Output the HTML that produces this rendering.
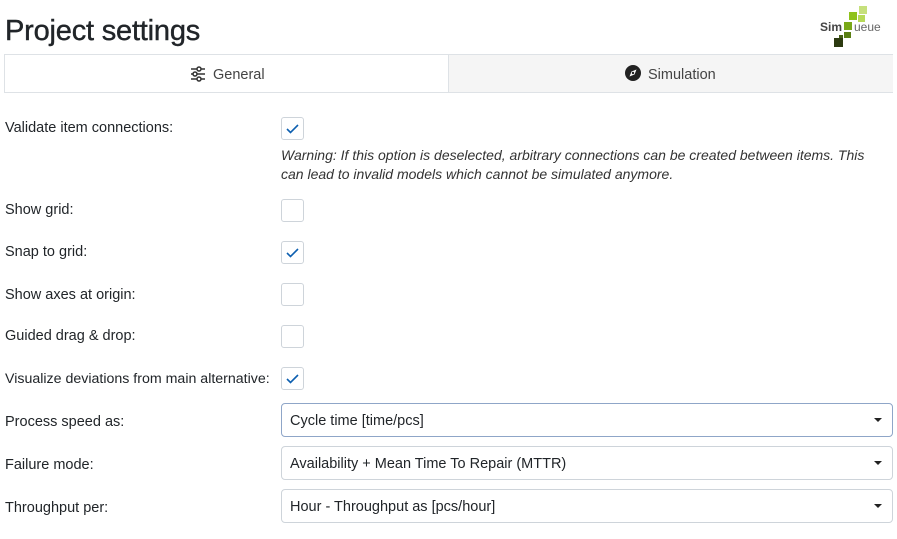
<!DOCTYPE html><html><head><style>
body{margin:0;width:897px;height:539px;background:#fff;font-family:"Liberation Sans",sans-serif;color:#212529;position:relative;overflow:hidden}
.a{position:absolute}
h1{position:absolute;left:5px;top:15px;margin:0;font-size:29px;font-weight:normal;letter-spacing:-0.2px;-webkit-text-stroke:0.4px #212529}
.tabs{left:4px;top:54px;width:887px;height:37px;border:1px solid #dee2e6;background:#fff}
.t2{position:absolute;left:443px;top:0;width:444px;height:37px;background:#f5f5f5;border-left:1px solid #dee2e6}
.tl{font-size:14.5px;color:#444}
.lab{left:5px;font-size:14.5px}
.cb{left:281px;width:21px;height:21px;border:1px solid #ced4da;border-radius:3px;background:#fff}
.cb svg{position:absolute;left:3px;top:3px}
.sel{left:281px;width:610px;height:32px;border:1px solid #ced4da;border-radius:4px;font-size:14.5px}
.sel span{position:absolute;left:8px;top:9px}
.sel i{position:absolute;right:10px;top:14px;border-left:4px solid transparent;border-right:4px solid transparent;border-top:4px solid #222}
</style></head><body>
<h1>Project settings</h1>
<svg class="a" style="left:818px;top:4px" width="76" height="44">
<rect x="41" y="2" width="8" height="8" fill="#c6e07c"/><rect x="31" y="8" width="8" height="8" fill="#8fc21c"/><rect x="40" y="11" width="7" height="7" fill="#b7da58"/>
<rect x="26" y="18" width="8" height="8" fill="#79a818"/><rect x="26" y="28" width="7" height="6" fill="#5a7f14"/><rect x="21" y="31" width="4" height="4" fill="#465e16"/><rect x="16" y="34" width="9" height="9" fill="#2c3a10"/>
<text x="2" y="27" font-family="Liberation Sans" font-size="12" fill="#444" font-weight="bold">Sim</text><text x="36" y="27" font-family="Liberation Sans" font-size="12" fill="#666">ueue</text>
</svg>
<div class="a tabs"><div class="t2"></div></div>
<svg class="a" style="left:190px;top:66px" width="16" height="16" fill="none" stroke="#333" stroke-width="1.5"><path d="M1 3h14M1 8h14M1 13h14"/><circle cx="9" cy="3" r="2" fill="#fff"/><circle cx="5" cy="8" r="2" fill="#fff"/><circle cx="9" cy="13" r="2" fill="#fff"/></svg>
<div class="a tl" style="left:213px;top:67px">General</div>
<svg class="a" style="left:625px;top:65px" width="16" height="16"><circle cx="8" cy="8" r="8" fill="#222"/><path d="M11.5 4.5L9.5 9.5L4.5 11.5L6.5 6.5Z" fill="#fff"/><circle cx="8" cy="8" r="1.2" fill="#222"/></svg>
<div class="a tl" style="left:648px;top:67px">Simulation</div>

<div class="a lab" style="top:120px">Validate item connections:</div>
<div class="a cb" style="top:117px"><svg width="15" height="15" fill="none" stroke="#0d5fb0" stroke-width="1.6"><path d="M2 8l3.5 3.5L13 4"/></svg></div>
<div class="a" style="left:281px;top:146px;font-size:14px;font-style:italic;line-height:19px;width:606px;color:#333">Warning: If this option is deselected, arbitrary connections can be created between items. This can lead to invalid models which cannot be simulated anymore.</div>

<div class="a lab" style="top:202px">Show grid:</div>
<div class="a cb" style="top:199px"></div>
<div class="a lab" style="top:244px">Snap to grid:</div>
<div class="a cb" style="top:241px"><svg width="15" height="15" fill="none" stroke="#0d5fb0" stroke-width="1.6"><path d="M2 8l3.5 3.5L13 4"/></svg></div>
<div class="a lab" style="top:287px">Show axes at origin:</div>
<div class="a cb" style="top:283px"></div>
<div class="a lab" style="top:328px">Guided drag &amp; drop:</div>
<div class="a cb" style="top:325px"></div>
<div class="a lab" style="top:371px;font-size:14.2px">Visualize deviations from main alternative:</div>
<div class="a cb" style="top:367px"><svg width="15" height="15" fill="none" stroke="#0d5fb0" stroke-width="1.6"><path d="M2 8l3.5 3.5L13 4"/></svg></div>

<div class="a lab" style="top:414px">Process speed as:</div>
<div class="a sel" style="top:403px;border-color:#8fa6c8"><span>Cycle time [time/pcs]</span><i></i></div>
<div class="a lab" style="top:457px">Failure mode:</div>
<div class="a sel" style="top:446px"><span>Availability + Mean Time To Repair (MTTR)</span><i></i></div>
<div class="a lab" style="top:500px">Throughput per:</div>
<div class="a sel" style="top:489px"><span>Hour - Throughput as [pcs/hour]</span><i></i></div>
</body></html>
